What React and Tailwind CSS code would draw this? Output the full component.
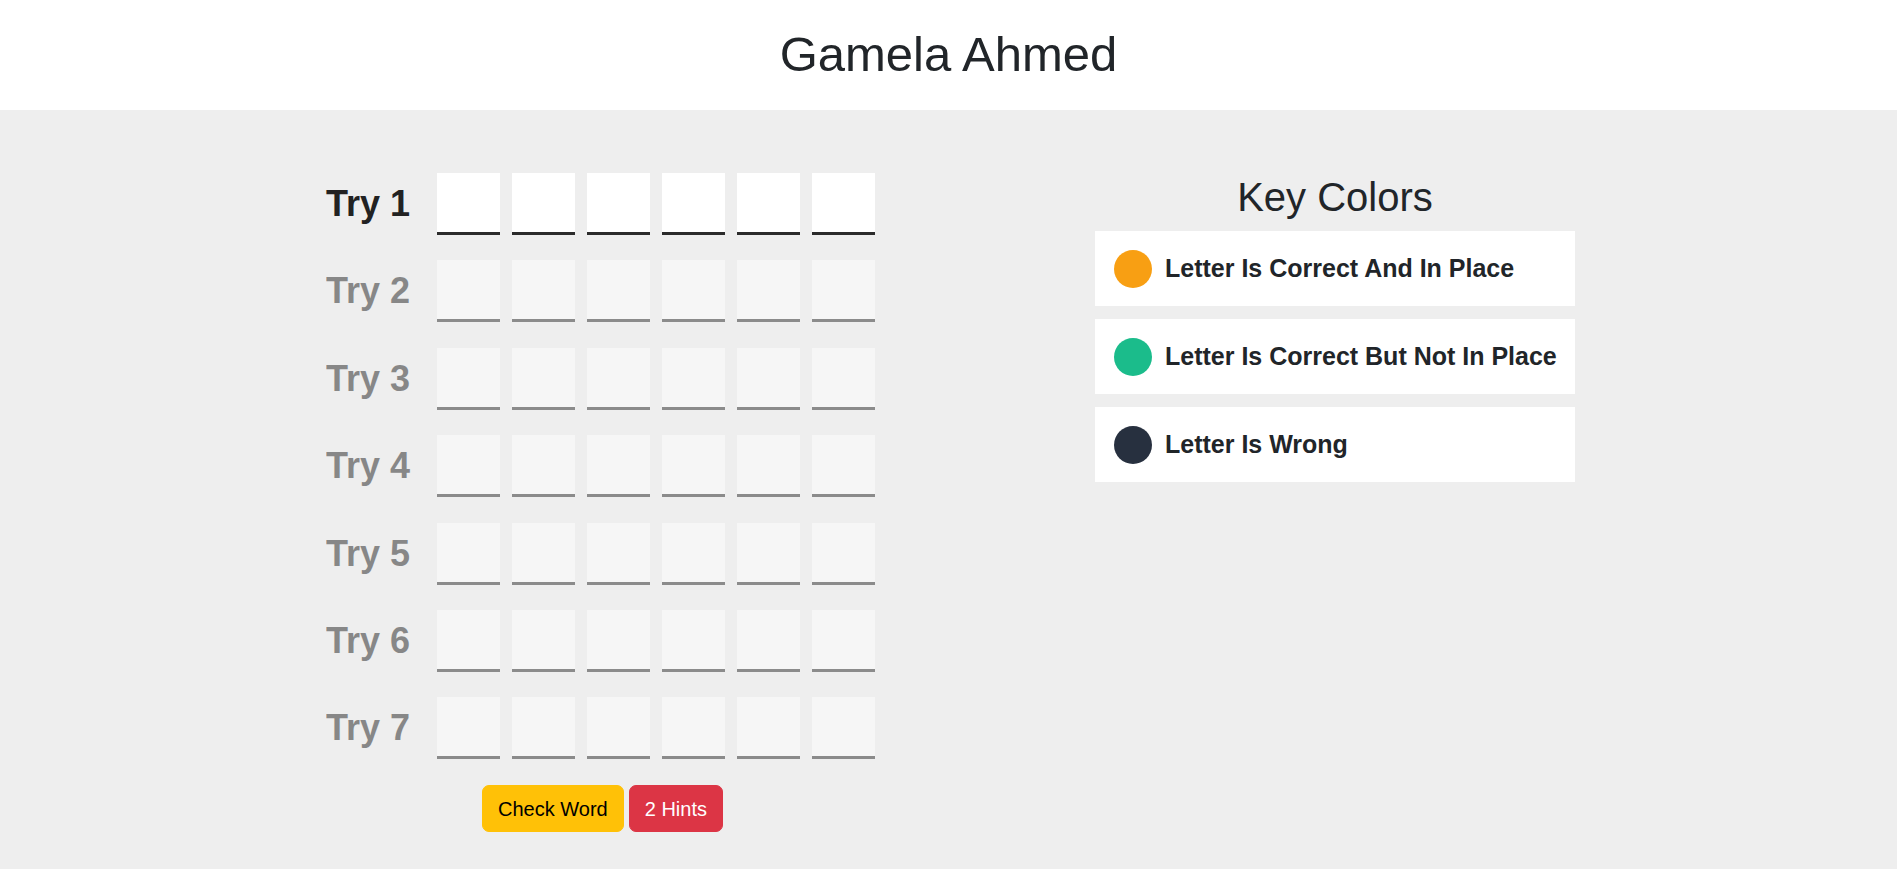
const TRIES = 7;
const LETTERS = 6;

const keys = [
  { color: "bg-[#f89f13]", text: "Letter Is Correct And In Place" },
  { color: "bg-[#1bbc8b]", text: "Letter Is Correct But Not In Place" },
  { color: "bg-[#27303f]", text: "Letter Is Wrong" },
];

const TryRow = ({ n, active }) => (
  <div className={`flex items-center ${active ? "" : "opacity-50"}`}>
    <span className="w-[111px] text-[36px] font-bold leading-none text-[#222]">Try {n}</span>
    <div className="flex gap-[12px]">
      {Array.from({ length: LETTERS }).map((_, i) => (
        <div key={i} className="h-[62px] w-[63px] border-b-[3px] border-[#2b2b2b] bg-white" />
      ))}
    </div>
  </div>
);

export default function App() {
  return (
    <div className="min-h-screen bg-[#eeeeee] font-['Liberation_Sans',Arial,sans-serif] text-[#212529]">
      <header className="flex h-[110px] items-center justify-center bg-white">
        <h1 className="text-[49px] leading-tight">Gamela Ahmed</h1>
      </header>

      <main className="flex justify-center gap-[220px] pl-[4px] pt-[63px]">
        <div className="flex flex-col">
          <div className="flex flex-col gap-[25.4px]">
            {Array.from({ length: TRIES }).map((_, i) => (
              <TryRow key={i} n={i + 1} active={i === 0} />
            ))}
          </div>
          <div className="mt-[26px] flex justify-center gap-[5px] pl-[4px]">
            <button
              type="button"
              className="rounded-[7px] border border-[#ffc107] bg-[#ffc107] px-[15px] py-[7.5px] text-[20px] leading-[30px] text-black"
            >
              Check Word
            </button>
            <button
              type="button"
              className="rounded-[7px] border border-[#dc3545] bg-[#dc3545] px-[15px] py-[7.5px] text-[20px] leading-[30px] text-white"
            >
              2 Hints
            </button>
          </div>
        </div>

        <div className="w-[480px]">
          <h2 className="text-center text-[40px] leading-[1.2]">Key Colors</h2>
          <div className="mt-[10px] flex flex-col gap-[13px]">
            {keys.map((k) => (
              <div key={k.text} className="flex h-[75px] items-center gap-[13px] bg-white px-[19px]">
                <span className={`h-[38px] w-[38px] shrink-0 rounded-full ${k.color}`} />
                <span className="whitespace-nowrap text-[25px] font-bold">{k.text}</span>
              </div>
            ))}
          </div>
        </div>
      </main>
    </div>
  );
}
